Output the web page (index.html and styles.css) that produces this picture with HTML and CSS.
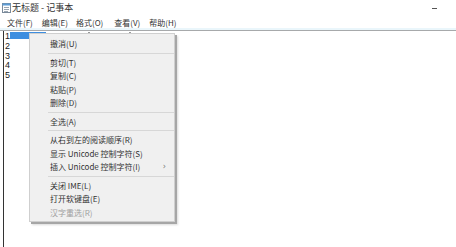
FILE: index.html
```html
<!DOCTYPE html>
<html lang="zh-CN">
<head>
<meta charset="utf-8">
<title>无标题 - 记事本</title>
<link rel="stylesheet" href="styles.css">
</head>
<body>
<div class="window">
  <div class="titlebar">
    <svg class="app-icon" width="9" height="10" viewBox="0 0 9 10">
      <rect x="0.5" y="0.5" width="8" height="9" fill="#fdfdfd" stroke="#7a8a9a"/>
      <rect x="0.5" y="0.5" width="8" height="2" fill="#5b9bd5"/>
      <line x1="2" y1="4.5" x2="7" y2="4.5" stroke="#9aa6b2"/>
      <line x1="2" y1="6.5" x2="7" y2="6.5" stroke="#9aa6b2"/>
      <line x1="2" y1="8.5" x2="6" y2="8.5" stroke="#9aa6b2"/>
    </svg>
    <span class="title">无标题 - 记事本</span>
    <span class="spacer"></span>
    <span class="minimize"></span>
  </div>
  <div class="menubar">
    <span class="menu-item">文件(F)</span>
    <span class="menu-item">编辑(E)</span>
    <span class="menu-item">格式(O)</span>
    <span class="menu-item">查看(V)</span>
    <span class="menu-item">帮助(H)</span>
  </div>
  <div class="band"></div>
  <div class="editor">
    <div class="line"><span>1</span><span class="sel"></span></div>
    <div class="line"><span>2</span></div>
    <div class="line"><span>3</span></div>
    <div class="line"><span>4</span></div>
    <div class="line"><span>5</span></div>
    <span class="mark mark-a"></span>
    <span class="mark mark-b"></span>
  </div>

  <div class="ctxmenu">
    <div class="ci">撤消(U)</div>
    <div class="sep"></div>
    <div class="ci">剪切(T)</div>
    <div class="ci">复制(C)</div>
    <div class="ci">粘贴(P)</div>
    <div class="ci">删除(D)</div>
    <div class="sep"></div>
    <div class="ci">全选(A)</div>
    <div class="sep"></div>
    <div class="ci">从右到左的阅读顺序(R)</div>
    <div class="ci">显示 Unicode 控制字符(S)</div>
    <div class="ci has-sub"><span>插入 Unicode 控制字符(I)</span><span class="arrow">›</span></div>
    <div class="sep"></div>
    <div class="ci">关闭 IME(L)</div>
    <div class="ci">打开软键盘(E)</div>
    <div class="ci disabled">汉字重选(R)</div>
  </div>
</div>
</body>
</html>
```

FILE: styles.css
```css
html, body {
  margin: 0;
  padding: 0;
  background: #ffffff;
}
.window {
  position: relative;
  width: 456px;
  height: 247px;
  overflow: hidden;
  background: #ffffff;
  font-family: "Noto Sans CJK SC", "Liberation Sans", sans-serif;
  color: #2b2b2b;
  display: flex;
  flex-direction: column;
}
.titlebar {
  height: 15px;
  display: flex;
  align-items: center;
  padding-left: 2px;
  flex: none;
}
.app-icon {
  display: block;
  margin-top: 0px;
}
.title {
  margin-left: 1px;
  font-size: 9px;
  line-height: 15px;
  color: #333333;
}
.spacer { flex: 1; }
.minimize {
  width: 5px;
  height: 1px;
  background: #555555;
  margin-right: 19px;
  margin-top: 1px;
}
.menubar {
  height: 11px;
  display: flex;
  align-items: center;
  padding-left: 7px;
  gap: 9px;
  font-size: 8px;
  line-height: 11px;
  color: #333333;
  margin-top: 2px;
  flex: none;
}
.menubar .menu-item:nth-child(3) { margin-left: -1px; }
.menubar .menu-item:nth-child(4) { margin-left: 2px; }
.band {
  height: 2px;
  background: #eaf6fb;
  border-bottom: 1px solid #a7a9ab;
  flex: none;
}
.editor {
  position: relative;
  flex: 1;
  margin-left: 3px;
  border-left: 1px solid #333333;
  padding-top: 1px;
  padding-left: 1px;
  font-family: "Liberation Sans", sans-serif;
  font-size: 9px;
  color: #222222;
}
.line {
  height: 9.8px;
  line-height: 9.8px;
  display: flex;
  align-items: flex-start;
}
.sel {
  display: block;
  width: 36px;
  height: 7px;
  background: #3d8ee0;
  margin-top: 0px;
  margin-left: 0px;
}
.mark {
  position: absolute;
  top: 1px;
  width: 2px;
  height: 1px;
  background: #9a9a9a;
}
.mark-a { left: 84px; }
.mark-b { left: 125px; }

.ctxmenu {
  position: absolute;
  left: 29px;
  top: 33px;
  width: 144px;
  padding: 3px 0 2px 0;
  background: #f0f0f0;
  border: 1px solid #cfcfcf;
  box-shadow: 2px 2px 0 #a6a6a6, 3px 3px 2px rgba(0,0,0,0.15);
  font-size: 8px;
  color: #333333;
}
.ci {
  height: 13.5px;
  line-height: 13.5px;
  padding-left: 20px;
  white-space: nowrap;
  display: flex;
  align-items: center;
}
.has-sub { justify-content: space-between; padding-right: 8px; }
.arrow {
  color: #777777;
  font-family: "DejaVu Sans", sans-serif;
  font-size: 8px;
}
.disabled { color: #a0a0a0; }
.sep {
  height: 1px;
  background: #d7d7d7;
  margin: 2px 0 2px 18px;
}
```
